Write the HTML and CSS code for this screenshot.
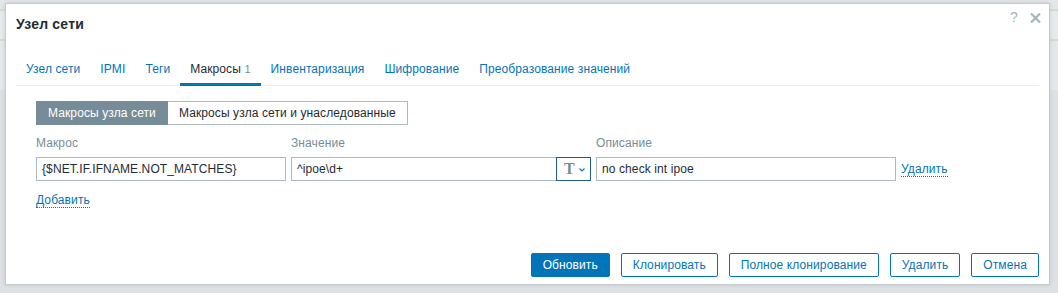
FILE: index.html
```html
<!DOCTYPE html>
<html lang="ru">
<head>
<meta charset="utf-8">
<title>Узел сети</title>
<link rel="stylesheet" href="styles.css">
</head>
<body>
<div class="overlay">
  <div class="dialog">
    <div class="dialog-head">
      <h4 class="dialog-title">Узел сети</h4>
      <div class="head-controls">
        <span class="help">?</span>
        <svg class="close" width="11" height="10" viewBox="0 0 11 10"><path d="M1 0.5 L10 9.5 M10 0.5 L1 9.5" stroke="#a9b4ba" stroke-width="2.2" fill="none"/></svg>
      </div>
    </div>
    <div class="dialog-body">
      <ul class="tabs">
        <li class="tab">Узел сети</li>
        <li class="tab">IPMI</li>
        <li class="tab">Теги</li>
        <li class="tab active">Макросы <span class="count">1</span></li>
        <li class="tab">Инвентаризация</li>
        <li class="tab">Шифрование</li>
        <li class="tab">Преобразование значений</li>
      </ul>
      <div class="panel">
        <div class="segmented">
          <span class="seg seg-on">Макросы узла сети</span>
          <span class="seg">Макросы узла сети и унаследованные</span>
        </div>
        <div class="macro-grid">
          <div class="lbl">Макрос</div>
          <div class="lbl">Значение</div>
          <div class="lbl">Описание</div>
          <div></div>
          <div class="input">{$NET.IF.IFNAME.NOT_MATCHES}</div>
          <div class="value-group">
            <div class="input value">^ipoe\d+</div>
            <div class="type-btn"><span class="type-t">T</span><svg class="chev" width="6" height="4" viewBox="0 0 6 4"><path d="M0.5 0.5 L3 3 L5.5 0.5" stroke="#0275b8" stroke-width="1.1" fill="none"/></svg></div>
          </div>
          <div class="input">no check int ipoe</div>
          <div class="row-action"><span class="link">Удалить</span></div>
        </div>
        <div class="add-row"><span class="link">Добавить</span></div>
      </div>
    </div>
    <div class="dialog-foot">
      <span class="btn btn-main">Обновить</span>
      <span class="btn">Клонировать</span>
      <span class="btn">Полное клонирование</span>
      <span class="btn">Удалить</span>
      <span class="btn">Отмена</span>
    </div>
  </div>
</div>
</body>
</html>
```

FILE: styles.css
```css
* { box-sizing: border-box; }

html, body { height: 100%; }

body {
  margin: 0;
  font-family: "Liberation Sans", Arial, sans-serif;
  font-size: 12px;
  letter-spacing: 0.1px;
  color: #1f2c33;
  background:
    linear-gradient(#e3e7e9 0 9px, #cddfd0 9px 11px, #e7eaec 11px 39px, #cddfd0 39px 41px, #e5e8ea 41px 90px, #dde1e4 90px);
}

.overlay {
  padding: 3px 8px 8px 5px;
  height: 100%;
}

.dialog {
  height: 282px;
  background: #ffffff;
  border: 1px solid #c3cbcf;
  box-shadow: 0 0 4px rgba(0, 0, 0, 0.12);
  display: flex;
  flex-direction: column;
}

.dialog-head {
  display: flex;
  align-items: flex-start;
  height: 40px;
  padding: 0 8px 0 10px;
}

.dialog-title {
  margin: 11px 0 0 0;
  font-size: 14px;
  line-height: 18px;
  font-weight: bold;
  letter-spacing: 0.2px;
  color: #1f2c33;
}

.head-controls {
  margin-left: auto;
  margin-top: 5px;
  display: flex;
  align-items: center;
  gap: 12px;
}

.help {
  font-size: 14px;
  line-height: 16px;
  color: #aab5bb;
}

.close { display: block; margin-top: 1px; }

.dialog-body {
  flex: 1;
  padding: 0 10px;
}

.tabs {
  list-style: none;
  margin: 0;
  padding: 18px 0 0 0;
  display: flex;
  border-bottom: 1px solid #ebeef0;
  letter-spacing: 0.1px;
}

.tab {
  padding: 0 10px 7px;
  line-height: 14px;
  color: #0275b8;
  border-bottom: 3px solid transparent;
  margin-bottom: -1px;
}

.tab.active {
  color: #1f2c33;
  border-bottom-color: #0275b8;
}

.count {
  font-size: 11px;
  color: #768d99;
}

.panel {
  padding: 15px 0 0 20px;
}

.segmented {
  display: flex;
}

.seg {
  height: 24px;
  line-height: 22px;
  padding: 0 11px;
  border: 1px solid #acbbc2;
  background: #ffffff;
  color: #1f2c33;
}

.seg-on {
  background: #768d99;
  border-color: #768d99;
  color: #ffffff;
}

.seg + .seg { border-left: none; }

.macro-grid {
  margin-top: 11px;
  display: grid;
  grid-template-columns: 250px 300px 300px auto;
  column-gap: 5px;
  row-gap: 7px;
  align-items: center;
}

.lbl {
  line-height: 14px;
  color: #768d99;
}

.input {
  height: 24px;
  line-height: 22px;
  border: 1px solid #acbbc2;
  padding: 0 5px;
  color: #1f2c33;
  white-space: nowrap;
  overflow: hidden;
}

.value-group {
  display: flex;
}

.value {
  flex: 1;
}

.type-btn {
  width: 35px;
  height: 24px;
  border: 1px solid #1f5f87;
  margin-left: -1px;
  display: flex;
  align-items: center;
  justify-content: center;
  gap: 4px;
}

.type-t {
  font-family: "Liberation Serif", "Times New Roman", serif;
  font-weight: bold;
  font-size: 16px;
  line-height: 16px;
  color: #768d99;
  padding-left: 2px;
}

.chev { display: block; margin-top: 1px; }

.link {
  color: #0275b8;
  border-bottom: 1px dotted #0275b8;
}

.row-action {
  line-height: 14px;
}

.add-row {
  margin-top: 12px;
  line-height: 14px;
}

.dialog-foot {
  display: flex;
  justify-content: flex-end;
  gap: 11px;
  padding: 0 10px 7px;
}

.btn {
  height: 24px;
  line-height: 22px;
  padding: 0 11px;
  border: 1px solid #0275b8;
  color: #0275b8;
  background: #ffffff;
  border-radius: 2px;
}

.btn-main {
  background: #0275b8;
  color: #ffffff;
}
```
